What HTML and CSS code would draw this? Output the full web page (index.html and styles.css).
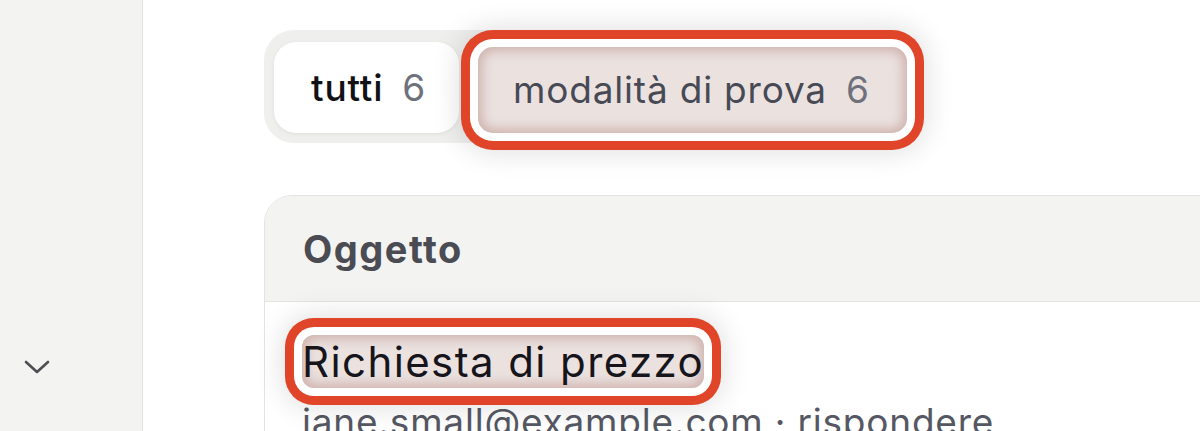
FILE: index.html
```html
<!DOCTYPE html>
<html lang="it">
<head>
<meta charset="utf-8">
<title>Messaggi</title>
<link rel="stylesheet" href="styles.css">
</head>
<body>
<div class="app">
  <aside class="sidebar">
    <svg class="chevron" width="26" height="16" viewBox="0 0 26 16" aria-hidden="true">
      <path d="M2 3 L13 13 L24 3" fill="none" stroke="#4d4d52" stroke-width="2.6" stroke-linecap="round" stroke-linejoin="round"/>
    </svg>
  </aside>
  <main class="main">
    <div class="tabs">
      <button class="tab tab-active">tutti <span class="count">6</span></button>
      <button class="tab tab-test hl">modalità di prova <span class="count">6</span></button>
    </div>
    <section class="card">
      <div class="card-head">Oggetto</div>
      <div class="row">
        <span class="subject hl hl-text">Richiesta di prezzo</span>
        <div class="meta">jane.small@example.com · rispondere</div>
      </div>
    </section>
  </main>
</div>
</body>
</html>
```
FILE: styles.css
```css
html, body {
  margin: 0;
  padding: 0;
  height: 100%;
  background: #ffffff;
  font-family: Inter, "Noto Sans", "Liberation Sans", sans-serif;
}

.app {
  display: flex;
  height: 431px;
  overflow: hidden;
}

.sidebar {
  flex: 0 0 143px;
  background: #f3f3f1;
  border-right: 1px solid #e3e3e0;
  padding: 359px 0 0 24px;
  box-sizing: border-box;
}

.chevron {
  display: block;
}

.main {
  flex: 1;
  min-width: 0;
  padding: 30px 0 0 121px;
  overflow: hidden;
}

.tabs {
  display: inline-flex;
  align-items: center;
  background: #efefed;
  border-radius: 30px;
  padding: 12px 12px 10px 10px;
}

.tab {
  font-family: inherit;
  border: 0;
  margin: 0;
  background: transparent;
  font-size: 37px;
  letter-spacing: 0.8px;
  line-height: 1;
  display: flex;
  align-items: center;
  gap: 19px;
  white-space: nowrap;
}

.tab-active {
  height: 91px;
  padding: 0 33px 0 37px;
  background: #ffffff;
  border-radius: 22px;
  color: #111116;
  font-weight: 500;
  box-shadow: 0 1px 4px rgba(0, 0, 0, 0.07);
}

.tab-test {
  height: 86px;
  margin: 4px 0 0 19px;
  padding: 0 37px 0 35px;
  color: #474a55;
}

.count {
  color: #6e717b;
  font-weight: 400;
}

/* annotation highlight ring */
.hl {
  position: relative;
  z-index: 1;
  background: #ebe2e0;
  border-radius: 15px;
  box-shadow:
    inset 0 0 12px 4px rgba(196, 160, 155, 0.75),
    0 0 0 8px #ffffff,
    0 0 0 17px #e0452a,
    0 0 28px 20px rgba(0, 0, 0, 0.12);
}

.card {
  margin-top: 52px;
  width: 1100px;
  border: 1px solid #e3e3e0;
  border-radius: 28px;
  background: #ffffff;
}

.card-head {
  height: 105px;
  display: flex;
  align-items: center;
  padding-left: 38px;
  background: #f3f3f1;
  border-bottom: 1px solid #e3e3e0;
  border-radius: 27px 27px 0 0;
  font-size: 38px;
  letter-spacing: 1.5px;
  font-weight: 700;
  color: #4a4b53;
}

.row {
  padding: 33px 37px 20px 37px;
}

.subject {
  display: inline-block;
  font-size: 42px;
  letter-spacing: 1.4px;
  line-height: 53px;
  color: #15151b;
}

.hl-text {
  border-radius: 12px;
}

.meta {
  margin-top: 12px;
  font-size: 37px;
  letter-spacing: 0.8px;
  line-height: 44px;
  color: #555863;
  white-space: nowrap;
}
```
